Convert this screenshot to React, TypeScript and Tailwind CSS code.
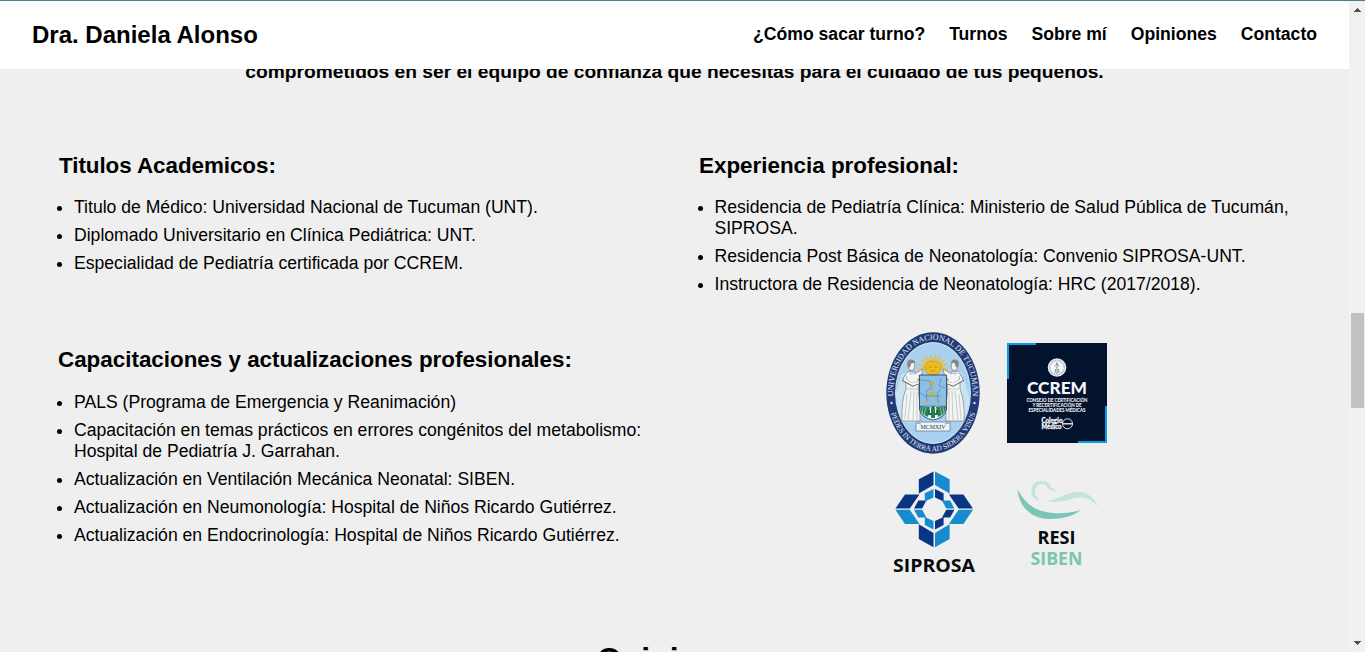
import React from "react";

const navLinks = ["¿Cómo sacar turno?", "Turnos", "Sobre mí", "Opiniones", "Contacto"];

const degrees = [
  ["Titulo de Médico: Universidad Nacional de Tucuman (UNT)."],
  ["Diplomado Universitario en Clínica Pediátrica: UNT."],
  ["Especialidad de Pediatría certificada por CCREM."],
];

const experience = [
  ["Residencia de Pediatría Clínica: Ministerio de Salud Pública de Tucumán,", "SIPROSA."],
  ["Residencia Post Básica de Neonatología: Convenio SIPROSA-UNT."],
  ["Instructora de Residencia de Neonatología: HRC (2017/2018)."],
];

const training = [
  ["PALS (Programa de Emergencia y Reanimación)"],
  ["Capacitación en temas prácticos en errores congénitos del metabolismo:", "Hospital de Pediatría J. Garrahan."],
  ["Actualización en Ventilación Mecánica Neonatal: SIBEN."],
  ["Actualización en Neumonología: Hospital de Niños Ricardo Gutiérrez."],
  ["Actualización en Endocrinología: Hospital de Niños Ricardo Gutiérrez."],
];

function BulletList({ items }: { items: string[][] }) {
  return (
    <ul className="flex flex-col gap-[7px]">
      {items.map((lines) => (
        <li key={lines[0]} className="flex text-[17.6px] leading-[21px]">
          <span className="mt-[9px] mr-[12px] size-[5px] shrink-0 rounded-full bg-black" />
          <div>
            {lines.map((line) => (
              <p key={line} className="whitespace-nowrap">{line}</p>
            ))}
          </div>
        </li>
      ))}
    </ul>
  );
}

function Figure({ flip }: { flip?: boolean }) {
  return (
    <g transform={flip ? "translate(94 0) scale(-1 1)" : undefined}>
      <path d="M20 50 Q17 42 23 39 L29 40 Q33 45 33 51 L32 57 Q35 72 34 89 L16 89 Q15 69 20 57Z" fill="#f3f4f4" stroke="#65727b" strokeWidth=".6" />
      <path d="M21 57 L31 57 M21 62 L19 87 M25 59 L22 88 M28 59 L27 88 M31 60 L31 88" stroke="#b3b9bc" strokeWidth=".7" fill="none" />
      <path d="M20 44 L18 48 L27 53 L34 50" stroke="#59646c" strokeWidth="3.2" fill="none" />
      <path d="M20 44 L18.4 47.8 L27 52.5 L34 49.7" stroke="#f6f5f2" strokeWidth="2.2" fill="none" />
      <path d="M28 42 L37 37 L35 45 L31 48" fill="#f4f3ef" stroke="#65727b" strokeWidth=".6" />
      <ellipse cx="25.5" cy="34" rx="3.3" ry="4.4" fill="#f2f1ed" stroke="#59646c" strokeWidth=".6" />
      <path d="M21.5 34 Q20 28 25 27.5 Q29 27.5 29 31 L25.5 31 L24 35 L22.5 36Z" fill="#89867d" />
      <path d="M24 38 V42 L28 41" stroke="#8b9195" strokeWidth=".6" fill="none" />
    </g>
  );
}

function UntSeal() {
  const rays = Array.from({ length: 19 }, (_, i) => -Math.PI + (i * Math.PI) / 18);
  return (
    <svg className="h-[122px] w-[94px]" viewBox="0 0 94 122">
      <ellipse cx="47" cy="61" rx="46.7" ry="60.7" fill="#203b77" />
      <ellipse cx="47" cy="61" rx="37.5" ry="50.5" fill="#a9d1ef" stroke="#edf3f7" strokeWidth=".8" />
      <path d="M15 43 Q20 38 24 43 L31 55 Q27 69 34 91 L18 90 Q10 80 10 62Z M62 43 Q74 33 78 47 L84 68 Q83 81 75 88 L61 87Z" fill="#cae3f3" />
      {rays.map((a, i) => (
        <line
          key={a}
          x1={47 + Math.cos(a) * 6}
          y1={37 + Math.sin(a) * 5}
          x2={47 + Math.cos(a) * (i % 2 ? 11.5 : 15)}
          y2={37 + Math.sin(a) * (i % 2 ? 11 : 14)}
          stroke="#edbc24"
          strokeWidth="1.3"
        />
      ))}
      <ellipse cx="47" cy="36" rx="8" ry="7" fill="#efb921" stroke="#b5892d" strokeWidth=".5" />
      <path d="M43 35 H45.5 M48.5 35 H51 M45 38.5 Q47 40 49 38.5" stroke="#94712c" strokeWidth=".6" fill="none" />
      <Figure />
      <Figure flip />
      <path d="M33.5 43 H60.5 V77 Q59 86 47 88 Q35 86 33.5 77Z" fill="#8cbfe4" stroke="#34445d" strokeWidth=".9" />
      <path d="M34 75 H60 Q59 85 47 87.5 Q35 85 34 75Z" fill="#f5f7f1" />
      <path d="M34 74 L44 75 L42 85 Q34 82 34 74Z M60 74 L50 75 L52 85 Q60 82 60 74Z" fill="#248154" />
      <path d="M37 75 L36 81 M40 75 L38 83 M57 75 L58 81 M54 75 L56 83" stroke="#a5cba5" strokeWidth=".8" />
      <path d="M34 48 L44 49 L45 56 L40 59 L41 69 M34 61 L39 64 L55 64 M55 46 L53 54 L59 56 M54 57 L51 63 L53 72 M34 74 H60" stroke="#557b9e" strokeWidth=".6" fill="none" />
      <path d="M46 86 V77 Q46 75 47 75 Q48 75 48 77 V86 M43 78 V82 H46 M51 78 V82 H48" stroke="#18713e" strokeWidth="1.8" fill="none" />
      <g fill="#e5b72f" stroke="#a18128" strokeWidth=".3">
        <circle cx="46" cy="51" r="1.5" />
        <circle cx="46" cy="56" r="1.4" />
        <circle cx="43" cy="63" r="1.2" />
        <circle cx="47" cy="62" r="1.7" />
        <circle cx="41" cy="69" r="1.1" />
        <circle cx="51" cy="68" r="1.2" />
      </g>
      <path d="M30 90 H64 V99 H30Z M31 91 L35 92 M63 91 L59 92" fill="#edf4f8" stroke="#5d7387" strokeWidth=".7" />
      <text x="47" y="97" textAnchor="middle" fontFamily="Liberation Serif, serif" fontSize="7" fill="#273344" textLength="25" lengthAdjust="spacingAndGlyphs">MCMXIV</text>
      <path id="seal-top" d="M7.4 66 A39.8 53 0 1 1 86.6 66" fill="none" />
      <text fontFamily="Liberation Serif, serif" fontSize="8" fill="#e8edf5" textAnchor="middle">
        <textPath href="#seal-top" startOffset="50%">UNIVERSIDAD NACIONAL DE TUCUMAN</textPath>
      </text>
      <path id="seal-bottom" d="M4 78 A45 58.3 0 0 0 90 78" fill="none" />
      <text fontFamily="Liberation Serif, serif" fontSize="7.4" fill="#e8edf5" textAnchor="middle">
        <textPath href="#seal-bottom" startOffset="50%">PEDES IN TERRA AD SIDERA VISUS</textPath>
      </text>
      <circle cx="5.5" cy="71" r="1.2" fill="#dbe5ef" />
      <circle cx="88.5" cy="71" r="1.2" fill="#dbe5ef" />
    </svg>
  );
}

function CcremLogo() {
  return (
    <svg className="size-[100px]" viewBox="0 0 100 100">
      <rect width="100" height="100" fill="#03122d" />
      <path d="M1 36 V1 H29 M71 99 H99 V63" stroke="#079ee6" strokeWidth="2" fill="none" />
      <circle cx="50" cy="24.5" r="9.3" fill="#e8edf2" />
      <circle cx="50" cy="24.5" r="7.3" fill="none" stroke="#9ba9b5" strokeWidth="1.2" strokeDasharray="1 .7" />
      <circle cx="50" cy="25" r="5.8" fill="#f6f7f8" />
      <path d="M50 19 V31 M47.5 23 L50 21 L52.5 23 M48.5 26 L48 30 M51.5 26 L52 30" stroke="#6f8295" strokeWidth=".9" fill="none" />
      <g fill="#f5f7fa" textAnchor="middle" fontFamily="Lato, sans-serif" fontWeight="900">
        <text x="50" y="50.8" fontSize="17" textLength="60" lengthAdjust="spacingAndGlyphs">CCREM</text>
        <g fontSize="4.8">
          <text x="50" y="59" textLength="61" lengthAdjust="spacingAndGlyphs">CONSEJO DE CERTIFICACIÓN</text>
          <text x="50" y="64" textLength="49" lengthAdjust="spacingAndGlyphs">Y RECERTIFICACIÓN DE</text>
          <text x="50" y="69" textLength="57" lengthAdjust="spacingAndGlyphs">ESPECIALIDADES MÉDICAS</text>
        </g>
        <g fontSize="7" stroke="#f5f7fa" strokeWidth=".3">
          <text x="45" y="80" textLength="21" lengthAdjust="spacingAndGlyphs">Colegio</text>
          <text x="44.5" y="86" textLength="20" lengthAdjust="spacingAndGlyphs">Médico</text>
        </g>
      </g>
      <circle cx="60.5" cy="80.8" r="5" fill="none" stroke="#f5f7fa" strokeWidth=".9" />
      <path d="M55.5 80.8 H65.5" stroke="#f5f7fa" strokeWidth="1.3" />
    </svg>
  );
}

function SiprosaLogo() {
  return (
    <svg className="h-[106px] w-[84px]" viewBox="0 0 84 106">
      <g fill="#083684">
        <path d="M26.8 8.3 L41.5 .6 V14 L26.8 22.6Z" />
        <path d="M13 23.4 H27.4 L17.8 37.6 H3.4Z" />
        <path d="M57 23.4 H71.4 L81 37.6 H66.6Z" />
        <path d="M26.8 53.2 L41.5 62 V76.2 L26.8 68Z" />
        <path d="M43 18 L51.6 22.3 V30.4 L43 26.6Z" />
        <path d="M26.3 29.6 L34.4 29.6 L30.1 37.6 H22Z" />
        <path d="M54.3 38.7 H62.4 L58.1 46.6 H50Z" />
        <path d="M43 50 L51.6 46 V54 L43 58.4Z" />
      </g>
      <g fill="#168bd0">
        <path d="M43 .6 L57.6 8.3 V22.6 L43 14Z" />
        <path d="M3.4 38.8 H17.8 L27.4 53 H13Z" />
        <path d="M66.6 38.8 H81 L71.4 53 H57Z" />
        <path d="M43 62 L57.6 53.2 V68 L43 76.2Z" />
        <path d="M32.8 22.3 L41.5 18 V26.6 L32.8 30.4Z" />
        <path d="M22 38.7 H30.1 L34.4 46.6 H26.3Z" />
        <path d="M50 29.6 H58.1 L62.4 37.6 H54.3Z" />
        <path d="M32.8 46 L41.5 50 V58.4 L32.8 54Z" />
      </g>
      <text x="42" y="100.9" textAnchor="middle" fontFamily="Open Sans, sans-serif" fontSize="18.5" fontWeight="700" textLength="82" lengthAdjust="spacingAndGlyphs" fill="#08090b">SIPROSA</text>
    </svg>
  );
}

function ResiSibenLogo() {
  return (
    <svg className="h-[90px] w-[84px]" viewBox="0 0 84 90">
      <path d="M1.5 8 C3 28 18 38 33 38 C47 38 57 35 65 29 C49 33.5 37 33 26 30 C14 26.5 7 19 1.5 8Z" fill="#7bc5b5" />
      <path d="M24 19.5 C17 18 15 14 15.3 9.5 C16 3 20 0 25 0 C31 0 34 3 34.5 6 Q38.5 7 39.7 11.5 Q35 7.5 31.5 8 C31 4 29 3 26 3 C18 3 16 13 24 19.5Z" fill="#c4e3da" />
      <path d="M30.7 19.7 C41 20 47 12 60 11.2 C72 10 79 18 82 26 C75 17 69 15.5 59 17 C50 19 42 23 30.7 19.7Z" fill="#c4e3da" />
      <g fontFamily="Open Sans, sans-serif" fontWeight="700" fontSize="18.2" textAnchor="middle">
        <text x="40.5" y="62.6" textLength="38" lengthAdjust="spacingAndGlyphs" fill="#07090a">RESI</text>
        <text x="40.5" y="84" textLength="52" lengthAdjust="spacingAndGlyphs" fill="#7bc5b5">SIBEN</text>
      </g>
    </svg>
  );
}

export default function App() {
  return (
    <div className="flex h-[652px] w-full overflow-hidden bg-[#efefef] font-['Liberation_Sans',Arial,sans-serif] text-black">
      <div className="flex w-[1349px] flex-col">
        <header className="flex h-[69px] shrink-0 items-center justify-between border-t border-[#527b8e] bg-white px-8">
          <h1 className="text-2xl font-bold">Dra. Daniela Alonso</h1>
          <nav className="flex gap-6 pb-[2px] text-[17.6px] font-bold">
            {navLinks.map((label) => (
              <a key={label} href="#" className="whitespace-nowrap">{label}</a>
            ))}
          </nav>
        </header>
        <main className="flex h-[583px] flex-col overflow-hidden">
          <p className="mt-[-8px] h-[22px] shrink-0 text-center text-[19.2px] leading-[21px] font-bold">
            comprometidos en ser el equipo de confianza que necesitas para el cuidado de tus pequeños.
          </p>
          <div className="grid shrink-0 grid-cols-[640px_1fr] pt-[70px] pl-[57px]">
            <section className="h-[194px]">
              <h2 className="mb-[18px] pl-[2px] text-[22.4px] leading-[26px] font-bold tracking-[-0.05px]">Titulos Academicos:</h2>
              <BulletList items={degrees} />
            </section>
            <section className="h-[179px]">
              <h2 className="mb-[18px] pl-[2px] text-[22.4px] leading-[26px] font-bold">Experiencia profesional:</h2>
              <div className="pl-[0.5px]">
                <BulletList items={experience} />
              </div>
            </section>
            <section>
              <h2 className="mb-[19px] pl-[1px] text-[22.4px] leading-[26px] font-bold">Capacitaciones y actualizaciones profesionales:</h2>
              <BulletList items={training} />
            </section>
            <section className="-mt-[15px] ml-[189px] grid h-[254px] grid-cols-[121px_100px] grid-rows-[139px_106px]">
              <UntSeal />
              <div className="pt-[11px]"><CcremLogo /></div>
              <div className="pl-[6px]"><SiprosaLogo /></div>
              <div className="pt-[10px] pl-[9px]"><ResiSibenLogo /></div>
            </section>
          </div>
          <h2 className="mt-[55px] shrink-0 pl-[1px] text-center text-[32px] leading-[37px] font-bold">Opiniones</h2>
        </main>
      </div>
      <aside className="flex w-4 shrink-0 flex-col items-center border-t border-[#527b8e] bg-[#f1f1f1]">
        <svg className="mt-[7px] ml-[1px] h-1 w-[7px] shrink-0" viewBox="0 0 7 4" shapeRendering="crispEdges"><path d="M0 4 L3.5 0 L7 4Z" fill="#505050" /></svg>
        <div className="mt-[301px] mr-[1px] ml-[2px] h-[95px] w-[13px] shrink-0 bg-[#c1c1c1]" />
        <svg className="mt-auto mb-[7px] ml-[1px] h-1 w-[7px] shrink-0" viewBox="0 0 7 4" shapeRendering="crispEdges"><path d="M0 0 L3.5 4 L7 0Z" fill="#505050" /></svg>
      </aside>
    </div>
  );
}
